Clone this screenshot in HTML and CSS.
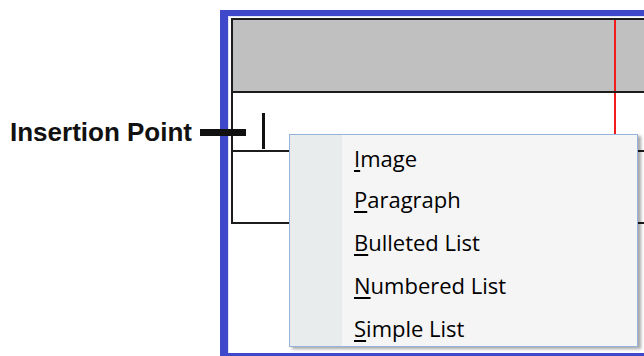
FILE: index.html
```html
<!doctype html>
<html lang="en">
<head>
<meta charset="utf-8">
<title>Insertion Point</title>
<link rel="stylesheet" href="styles.css">
</head>
<body>

	<div class="callout">
		<span class="callout-text">Insertion Point</span>
		<span class="callout-bar"></span>
	</div>

	<div class="window">
		<div class="grid">
			<div class="row row-head">
				<div class="cell cell-main"></div>
				<div class="cell"></div>
			</div>
			<div class="row row-edit">
				<div class="cell cell-main"><span class="caret"></span></div>
				<div class="cell"></div>
			</div>
			<div class="row row-next">
				<div class="cell cell-main"></div>
				<div class="cell"></div>
			</div>
		</div>
	</div>

	<div class="menu">
		<div class="menu-gutter"></div>
		<ul class="menu-items">
			<li class="menu-item first"><u>I</u>mage</li>
			<li class="menu-item"><u>P</u>aragraph</li>
			<li class="menu-item"><u>B</u>ulleted List</li>
			<li class="menu-item"><u>N</u>umbered List</li>
			<li class="menu-item"><u>S</u>imple List</li>
		</ul>
	</div>

</body>
</html>
```

FILE: styles.css
```css
/* frame blue, menu tints */

	html { --frame-color: #3f47cb; --menu-border: #94b4dc; --menu-back: #f5f5f5; --gutter-back: #e8eced; }

	body, html { background-color: white; height: 100%; margin: 0; overflow: hidden; }

	body { position: relative; }

	/* label pointing at the caret */

	.callout { align-items: center; display: flex; gap: 8px; left: 10px; position: absolute; top: 117px; z-index: 5; }
	.callout-text { color: #111; font: bold 26px/30px "Liberation Sans", Arial, sans-serif; }
	.callout-bar { background-color: #111; display: block; height: 7px; width: 46px; }

	/* blue editor window */

	.window { border-bottom: 3px solid var( --frame-color ); border-left: 8px solid var( --frame-color ); border-top: 6px solid var( --frame-color );
		box-shadow: inset 1px 1px 0 #dfe3f7; box-sizing: border-box; height: 346px; margin: 10px 0 0 220px; overflow: hidden; padding: 2px 0 0 3px; }

	.grid { border-left: 2px solid #1c1c1c; border-top: 2px solid #1c1c1c; width: 430px; }

	.row { border-bottom: 2px solid #1c1c1c; display: grid; grid-template-columns: 383px 1fr; }
	.row-head { background-color: #c0c0c0; height: 71px; }
	.row-edit { height: 57px; }
	.row-next { height: 70px; }

	.cell-main { border-right: 2px solid #f21c1c; box-sizing: border-box; }
	.row-edit .cell-main { padding: 20px 0 0 29px; }

	.caret { background-color: #111; display: block; height: 36px; width: 3px; }

	/* insert popup */

	.menu { background-color: var( --menu-back ); border: 1px solid var( --menu-border ); box-shadow: 3px 2px 3px rgba( 0, 0, 0, .35 );
		box-sizing: border-box; display: flex; height: 213px; left: 289px; overflow: hidden; position: absolute; top: 134px; width: 349px; z-index: 4; }

	.menu-gutter { background-color: var( --gutter-back ); flex: 0 0 52px; }

	.menu-items { display: flex; flex-direction: column; gap: 5px; list-style: none; margin: 0; padding: 7px 0 0 12px; }

	.menu-item { color: #000; font: 22px/38px "Open Sans", "Noto Sans", sans-serif; white-space: nowrap; }
	.menu-item.first { line-height: 33px; }
	.menu-item u { text-decoration-thickness: 1.5px; text-underline-offset: 3px; }
```
